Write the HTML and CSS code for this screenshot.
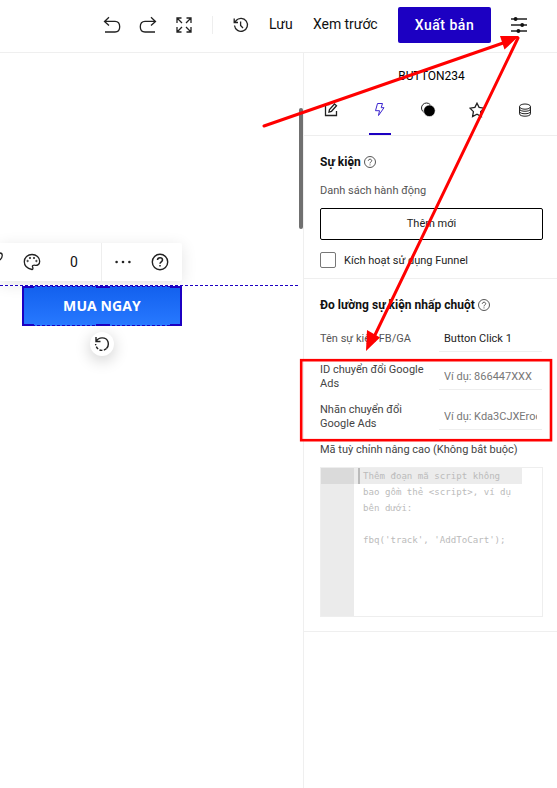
FILE: index.html
```html
<!DOCTYPE html>
<html lang="vi">
<head>
<meta charset="utf-8">
<title>Button234</title>
<link rel="stylesheet" href="styles.css">
</head>
<body>
<div class="app">
  <header class="topbar">
    <svg class="tool" width="18" height="18" viewBox="0 0 18 18"><path d="M6 1.2L1.5 5.4L6 9.6M1.5 5.4H12Q16.7 5.4 16.7 10.8Q16.7 16 12 16H2"/></svg>
    <svg class="tool" width="18" height="18" viewBox="0 0 18 18"><path d="M12 1.2L16.5 5.4L12 9.6M16.5 5.4H6Q1.3 5.4 1.3 10.8Q1.3 16 6 16H16"/></svg>
    <svg class="tool expand" width="18" height="18" viewBox="0 0 18 18"><path d="M2 7V2H6.5M2 2L7 7M11.500 2H16V7M16 2L11 7M2 11V16H6.500M2 16L7 11M11.500 16H16V11M16 16L11 11"/></svg>
    <span class="divider"></span>
    <svg class="tool history" width="16" height="16" viewBox="0 0 16 16"><path d="M1.500 8.500A6.500 6.500 0 1 0 3 3.600M1.200 1.500V5.500H5M7.600 4.500V8.500L10 11M2 4.800L4 2.700"/></svg>
    <span class="link save">Lưu</span>
    <span class="link preview">Xem trước</span>
    <button class="publish">Xuất bản</button>
    <svg class="sliders" width="16" height="16" viewBox="0 0 16 16"><path d="M0 2H16M0 8H16M0 14H16"/><circle cx="4.600" cy="2" r="1.900"/><circle cx="11.200" cy="8" r="1.900"/><circle cx="7.400" cy="14" r="1.900"/></svg>
  </header>
  <div class="workspace">
    <main class="canvas">
      <div class="float-bar">
        <svg class="cut" width="4" height="12" viewBox="0 0 4 12"><path d="M0 1C3 1 3 5 0 8"/></svg>
        <svg class="palette" width="18" height="18" viewBox="0 0 18 18"><path d="M9 16.500C3.800 15.500 1.300 12.300 1.300 8.800C1.300 4.600 4.700 1.500 9 1.500C13.400 1.500 16.700 4.500 16.700 8.200C16.700 11.600 14.300 12.500 12.200 12.300C10 12 9 12.600 9.600 14C10.200 15.500 9.900 16.500 9 16.500Z"/><circle cx="4.600" cy="8" r=".7"/><circle cx="7" cy="5" r=".7"/><circle cx="11" cy="5" r=".7"/><circle cx="13.400" cy="8" r=".7"/></svg>
        <span class="count">0</span>
        <span class="more"><svg width="18" height="4" viewBox="0 0 18 4"><circle cx="2.600" cy="2" r="1.300"/><circle cx="9" cy="2" r="1.300"/><circle cx="15.400" cy="2" r="1.300"/></svg></span>
        <svg class="help-lg" width="18" height="18" viewBox="0 0 18 18"><circle cx="9" cy="9" r="7.700"/><path d="M6.500 7C6.500 5.500 7.500 4.700 9 4.700C10.500 4.700 11.500 5.600 11.500 6.900C11.500 8.800 9 8.800 9 10.700M9 12.100V13.600"/></svg>
      </div>
      <div class="guide"></div>
      <div class="cta">MUA NGAY<svg class="selection" width="160" height="40" viewBox="0 0 160 40"><path d="M1 0V40M159 0V40M0 1H12M74 1H88M148 1H160M0 39H12M74 39H88M148 39H160"/><path class="dash" d="M0 .5H160M0 39.500H160"/></svg></div>
      <div class="rotate"><svg width="16" height="16" viewBox="0 0 16 16"><path d="M2 1V5.500H6.500M2.200 5.200C5 .5 12 1 13.900 5.500C15 9 14 11 12.500 12.500"/><path class="dots" d="M12.500 12.500C8 16.500 2 13.500 1.600 8"/></svg></div>
      <div class="scrollbar"></div>
    </main>
    <aside class="panel">
      <h1 class="title">BUTTON234</h1>
      <nav class="tabs">
        <span class="tab"><svg width="16" height="16" viewBox="0 0 16 16"><path class="bold" d="M6.500 2.600H2.500V13.500H13.500V9M6 10L6.500 7.500L11.500 2L13.500 3.800L8.500 9.300Z"/></svg></span>
        <span class="tab active"><svg width="16" height="16" viewBox="0 0 16 16"><path d="M5.500 1.500H10.500L9.200 5.700H12L6.500 13.500L7.500 8.700H3.500Z"/></svg></span>
        <span class="tab"><svg width="16" height="16" viewBox="0 0 16 16"><circle cx="6.500" cy="6" r="5"/><circle cx="9.400" cy="8.800" r="5.800" fill="#000" stroke="#fff" stroke-width=".6"/></svg></span>
        <span class="tab"><svg width="16" height="16" viewBox="0 0 16 16"><path class="bold" d="M8 1.200L10.100 5.400L15 6.200L11.600 9.600L12.400 14.500L8 12.200L3.600 14.500L4.400 9.600L1 6.200L5.900 5.400Z"/></svg></span>
        <span class="tab"><svg width="16" height="16" viewBox="0 0 16 16"><ellipse cx="8" cy="4.600" rx="5.500" ry="2.600"/><path d="M2.500 4.600V11.800C2.500 15 13.500 15 13.500 11.800V4.600M2.500 7C2.500 10 13.500 10 13.500 7M2.500 9.500C2.500 12.500 13.500 12.500 13.500 9.500"/></svg></span>
      </nav>
      <section class="events">
        <h2><span>Sự kiện</span><svg class="help" width="12" height="12" viewBox="0 0 12 12"><circle cx="6" cy="6" r="5.500"/><path d="M4.300 4.800C4.300 2.600 7.700 2.700 7.700 4.700C7.700 6 6 5.900 6 7.400M6 8.400V9.400"/></svg></h2>
        <p class="sub">Danh sách hành động</p>
        <button class="add">Thêm mới</button>
        <label class="check"><span class="box"></span><span class="check-text">Kích hoạt sử dụng Funnel</span></label>
      </section>
      <section class="tracking">
        <h2><span>Đo lường sự kiện nhấp chuột</span><svg class="help" width="12" height="12" viewBox="0 0 12 12"><circle cx="6" cy="6" r="5.500"/><path d="M4.300 4.800C4.300 2.600 7.700 2.700 7.700 4.700C7.700 6 6 5.900 6 7.400M6 8.400V9.400"/></svg></h2>
        <div class="row first"><span class="name muted">Tên sự kiện FB/GA</span><span class="field"><span class="value">Button Click 1</span></span></div>
        <div class="row"><span class="name">ID chuyển đổi Google Ads</span><span class="field hint"><span class="value">Ví dụ: 866447XXX</span></span></div>
        <div class="row last"><span class="name">Nhãn chuyển đổi Google Ads</span><span class="field hint"><span class="value">Ví dụ: Kda3CJXEroo</span></span></div>
        <p class="custom">Mã tuỳ chỉnh nâng cao (Không bắt buộc)</p>
        <div class="editor">
          <div class="gutter"><div class="gutter-line"></div></div>
          <pre class="code"><span class="line current">Thêm đoạn mã script không</span><span class="line">bao gồm thẻ &lt;script&gt;, ví dụ</span><span class="line">bên dưới:</span><span class="line"> </span><span class="line">fbq('track', 'AddToCart');</span></pre>
        </div>
      </section>
    </aside>
  </div>
  <svg class="annotations" width="557" height="788" viewBox="0 0 557 788">
    <rect x="301.200" y="360.200" width="249.800" height="80" fill="none" stroke="#f00" stroke-width="2.600"/>
    <path d="M264 126L506 42M518 38L374 337" fill="none" stroke="#f00" stroke-width="3" stroke-linecap="round"/>
    <path class="head" d="M519 36L500 36L504.500 49.500ZM366 351L367 330L380 337.500Z"/>
  </svg>
</div>
</body>
</html>
```
FILE: styles.css
```css
* { box-sizing: border-box; }
body { margin: 0; background: #fff; color: #111; font: 11px/14px Roboto, "Liberation Sans", sans-serif; overflow: hidden; }
h1, h2, p, pre { margin: 0; }
button { font-family: inherit; padding: 0; }
svg { display: block; flex: none; fill: none; stroke: #222; stroke-width: 1.3; }
.app { position: relative; width: 557px; height: 788px; overflow: hidden; display: flex; flex-direction: column; }
.topbar { height: 53px; flex: none; border-bottom: 1px solid #efefef; display: flex; align-items: center; padding: 0 0 3px 103px; white-space: nowrap; }
.tool + .tool { margin-left: 18px; }
.divider { width: 1px; height: 18px; background: #eee; margin: 0 20px 0 19px; }
.link { font-size: 14px; line-height: 20px; margin-top: -2px; color: #111; }
.save { margin-left: 20px; width: 24px; }
.preview { margin-left: 20px; width: 65px; letter-spacing: -.05px; }
.publish { margin-left: 20px; width: 93px; height: 36px; border: 0; border-radius: 2px; background: #1c00c2; color: #fff; font-size: 14px; font-weight: 500; letter-spacing: .5px; }
.sliders { margin-left: 20px; stroke-width: 1.6; }
.sliders circle { fill: #111; stroke: none; }
.workspace { flex: 1; display: flex; }
.canvas { width: 303px; position: relative; }
.float-bar { position: absolute; left: 0; top: 190px; width: 182px; height: 38px; background: #fff; border-radius: 0 2px 2px 0; box-shadow: 0 3px 16px rgba(0,0,0,.11); display: flex; align-items: center; }
.cut { margin-top: -8px; }
.palette { margin-left: 19px; }
.float-bar circle { stroke-width: 1; }
.count { width: 60px; text-align: center; font-size: 14px; margin-left: 3px; }
.more { margin-left: -3px; height: 38px; width: 50px; border-left: 1px solid #eee; display: flex; align-items: center; padding-left: 12px; }
.float-bar .more circle { fill: #222; stroke: none; }
.help-lg { stroke-width: 1.5; }
.float-bar .help-lg circle { stroke-width: 1.4; }
.guide { position: absolute; left: 0; top: 232px; width: 299px; height: 1px; background: repeating-linear-gradient(90deg, #1c00c2 0 3px, #fff 3px 5px); }
.cta { position: absolute; left: 22px; top: 233px; width: 160px; height: 40px; background: linear-gradient(#1260ee, #2879ff); color: #fff; font: 700 14px/40px "Open Sans", sans-serif; letter-spacing: .1px; text-align: center; }
.selection { position: absolute; inset: 0; stroke: #1c00c2; stroke-width: 2; }
.dash { stroke-width: 1; stroke-dasharray: 3 2; }
.rotate { position: absolute; left: 90px; top: 279px; width: 24px; height: 24px; border-radius: 50%; background: #fff; box-shadow: 0 4px 16px rgba(0,0,0,.2); display: flex; align-items: center; justify-content: center; }
.rotate svg { stroke-width: 1.4; }
.dots { stroke-dasharray: 3 1.5; }
.scrollbar { position: absolute; left: 299px; top: 55px; width: 4px; height: 121px; border-radius: 2px; background: #707070; }
.panel { width: 254px; border-left: 1px solid #efefef; }
.title { height: 35px; padding-top: 16px; font-size: 12px; font-weight: 400; text-align: center; color: #000; padding-left: 2px; }
.tabs { height: 48px; display: flex; padding-left: 3px; border-bottom: 1px solid #eee; }
.tab { width: 48.500px; display: flex; justify-content: center; padding-top: 14px; position: relative; }
.tab svg { stroke-width: 1; }
.tab .bold { stroke-width: 1.300; }
.active svg { stroke: #3c25cf; }
.active::after { content: ""; position: absolute; bottom: 0; left: 13px; width: 22px; height: 2px; background: #1c00c2; }
.events { height: 143px; padding: 18px 14px 0 16px; border-bottom: 1px solid #efefef; }
h2 { height: 16px; display: flex; align-items: center; gap: 3px; font-size: 12px; line-height: 16px; font-weight: 700; letter-spacing: .03px; color: #111; white-space: nowrap; }
.help { stroke-width: .9; stroke: #444; }
.sub { margin-top: 14px; color: #555; }
.add { display: block; width: 223px; height: 32px; margin-top: 10px; padding-bottom: 2px; border: 1px solid #000; border-radius: 2px; background: #fff; color: #222; font-size: 11px; }
.check { display: flex; align-items: center; margin-top: 12px; height: 16px; gap: 8px; color: #222; }
.check-text { padding-top: 2px; }
.box { width: 16px; height: 16px; border: 1px solid #777; border-radius: 2px; }
.tracking { height: 353px; padding: 18px 14px 0 16px; border-bottom: 1px solid #efefef; }
.row { display: flex; align-items: center; height: 40px; color: #444; }
.first { height: 36px; margin-top: 8px; }
.name { width: 119px; flex: none; padding-right: 14px; }
.muted { color: #555; }
.field { width: 103px; height: 26px; padding: 0 5px; border-bottom: 1px solid #eee; line-height: 26px; color: #222; }
.value { display: block; overflow: hidden; white-space: nowrap; }
.hint { color: #777; }
.custom { margin-top: 6px; color: #444; white-space: nowrap; }
.editor { width: 223px; height: 150px; margin-top: 10px; border: 1px solid #eee; display: flex; }
.gutter { width: 33px; flex: none; background: #ebebeb; }
.gutter-line { height: 16px; background: #dadada; }
.code { width: 168px; flex: none; font: 9.120px/16px "DejaVu Sans Mono", monospace; color: #bbb; }
.line { display: block; height: 16px; padding-left: 9px; }
.current { position: relative; background: #ececec; }
.current::before { content: ""; position: absolute; left: 4px; top: 0; width: 2px; height: 16px; background: #bbb; }
.annotations { position: absolute; inset: 0; pointer-events: none; }
.annotations .head { fill: #f00; stroke: none; }
```
